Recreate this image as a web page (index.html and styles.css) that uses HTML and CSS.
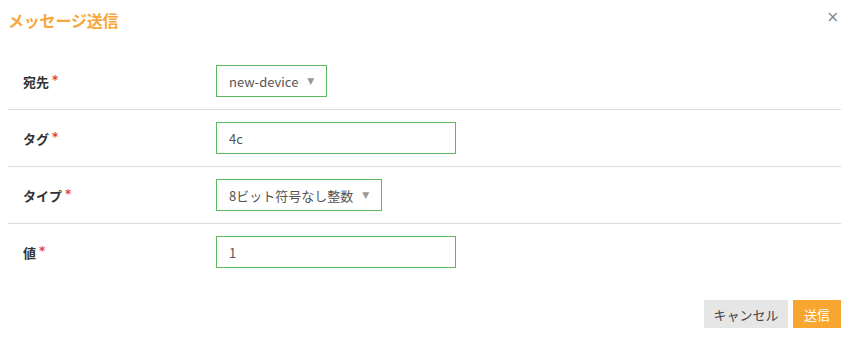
FILE: index.html
```html
<!DOCTYPE html>
<html lang="ja">
<head>
<meta charset="utf-8">
<link rel="stylesheet" href="styles.css">
</head>
<body>
<div class="dialog">
  <div class="header">
    <h1 class="title">メッセージ送信</h1>
    <span class="close">×</span>
  </div>
  <div class="form">
    <div class="row">
      <label class="label">宛先<span class="req">*</span></label>
      <div class="select"><span>new-device</span><span class="arrow">▼</span></div>
    </div>
    <div class="row">
      <label class="label">タグ<span class="req">*</span></label>
      <div class="input">4c</div>
    </div>
    <div class="row">
      <label class="label">タイプ<span class="req">*</span></label>
      <div class="select"><span>8ビット符号なし整数</span><span class="arrow">▼</span></div>
    </div>
    <div class="row last">
      <label class="label">値<span class="req">*</span></label>
      <div class="input">1</div>
    </div>
  </div>
  <div class="footer">
    <button class="btn cancel">キャンセル</button>
    <button class="btn send">送信</button>
  </div>
</div>
</body>
</html>
```
FILE: styles.css
```css
html, body { margin: 0; padding: 0; background: #fff; }
body {
  font-family: "Noto Sans CJK JP", "Noto Sans", sans-serif;
  color: #333;
  width: 850px;
  height: 337px;
  overflow: hidden;
}
.dialog { padding: 0 9px 0 8px; }
.header {
  display: flex;
  justify-content: space-between;
  align-items: center;
  height: 40px;
}
.title {
  margin: 0;
  font-size: 16px;
  font-weight: 700;
  color: #f8a73a;
  line-height: 40px;
  letter-spacing: -0.2px;
}
.close {
  font-family: "DejaVu Sans", sans-serif;
  font-size: 15px;
  color: #888;
  line-height: 1;
  margin-right: 2px;
  margin-top: -5px;
}
.form { margin-top: 13px; }
.row {
  display: flex;
  align-items: center;
  padding: 12px 0;
  border-bottom: 1px solid #dcdcdc;
}
.row.last { border-bottom: none; }
.label {
  width: 193px;
  padding-left: 15px;
  font-size: 13px;
  font-weight: 700;
  color: #333;
  display: flex;
  align-items: center;
}
.req {
  color: #e5433b;
  font-family: "DejaVu Sans", sans-serif;
  font-size: 12px;
  margin-left: 3px;
  font-weight: 700;
  position: relative;
  top: -1px;
}
.select, .input {
  box-sizing: border-box;
  height: 32px;
  border: 1px solid #5cb85c;
  display: flex;
  align-items: center;
  padding-left: 12px;
  font-size: 13px;
  color: #555;
  white-space: nowrap;
}
.select { padding-right: 12px; }
.arrow {
  font-family: "DejaVu Sans", sans-serif;
  font-size: 9px;
  color: #999;
  margin-left: 9px;
}
.input { width: 240px; }
.footer {
  display: flex;
  justify-content: flex-end;
  gap: 5px;
  margin-top: 20px;
}
.btn {
  border: none;
  height: 28px;
  font-family: "Noto Sans CJK JP", sans-serif;
  font-size: 13px;
  padding: 0;
}
.cancel { width: 84px; background: #e6e6e6; color: #444; }
.send { width: 48px; background: #f9a630; color: #fff; }
```
